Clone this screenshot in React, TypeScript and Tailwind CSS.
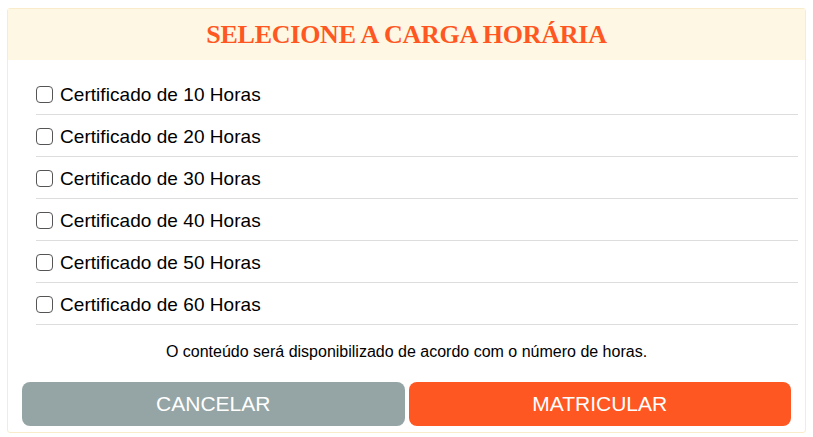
import React, { useState } from 'react';

const horas = [10, 20, 30, 40, 50, 60];

export default function App() {
    const [selected, setSelected] = useState<number[]>([]);

    const toggle = (h: number) =>
        setSelected(prev => (prev.includes(h) ? prev.filter(x => x !== h) : [...prev, h]));

    return (
        <div className="bg-white pt-[8px] px-[7px]" style={{ fontFamily: '"Liberation Sans", Arial, sans-serif' }}>
            <div className="w-[799px] border border-[#f8ecca] rounded-[3px] bg-white">
                <div className="h-[51px] bg-[#fdf7e3] flex items-center justify-center">
                    <h2
                        className="text-[26px] font-bold text-[#ff5722] tracking-[-0.25px]"
                        style={{ fontFamily: '"Liberation Serif", "Times New Roman", serif' }}
                    >
                        SELECIONE A CARGA HORÁRIA
                    </h2>
                </div>

                <div className="pt-[13px] pl-[28px] pr-[7px]">
                    {horas.map(h => (
                        <label
                            key={h}
                            className="flex items-center h-[42px] border-b border-[#dddddd] cursor-pointer"
                        >
                            <input
                                type="checkbox"
                                checked={selected.includes(h)}
                                onChange={() => toggle(h)}
                                className="appearance-none w-[17px] h-[17px] border border-[#555555] rounded-[4px] bg-white mr-[7px] mt-[1px] checked:bg-[#ff5722] checked:border-[#ff5722]"
                            />
                            <span className="text-[19px] text-black tracking-[0.05px] mt-[4px]">Certificado de {h} Horas</span>
                        </label>
                    ))}
                </div>

                <p className="text-center text-[16px] text-black mt-[17px] leading-[20px]">
                    O conteúdo será disponibilizado de acordo com o número de horas.
                </p>

                <div className="flex gap-[4px] px-[14px] pt-[20px] pb-[6px]">
                    <button className="flex-1 h-[44px] rounded-[8px] bg-[#95a5a6] text-white text-[21px]">
                        CANCELAR
                    </button>
                    <button className="flex-1 h-[44px] rounded-[8px] bg-[#ff5722] text-white text-[21px]">
                        MATRICULAR
                    </button>
                </div>
            </div>
        </div>
    );
}
